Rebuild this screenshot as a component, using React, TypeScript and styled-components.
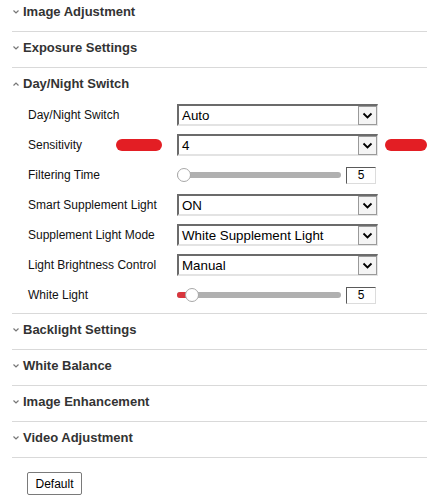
import React from "react";
import styled, { createGlobalStyle } from "styled-components";

const Global = createGlobalStyle`
  html, body { margin: 0; padding: 0; background: #fff; }
  body { font-family: Arial, "Liberation Sans", sans-serif; }
`;

const Page = styled.div`
  width: 415px;
  margin-left: 12px;
  display: flex;
  flex-direction: column;
`;

const Section = styled.div<{ $open?: boolean }>`
  border-bottom: 1px solid #d9d9d9;
  margin-bottom: 4px;
  padding-bottom: ${(p) => (p.$open ? "3px" : "8px")};
`;

const Header = styled.div`
  height: 23px;
  display: flex;
  align-items: center;
  gap: 3px;
  font-size: 13px;
  font-weight: bold;
  color: #333;
`;

const Rows = styled.div`
  margin-top: 5px;
  display: flex;
  flex-direction: column;
`;

const Row = styled.div`
  height: 30px;
  display: grid;
  grid-template-columns: 149px 1fr;
  align-items: center;
  padding-left: 16px;
`;

const Label = styled.div`
  display: flex;
  align-items: center;
  font-size: 12px;
  color: #111;
`;

const Control = styled.div`
  display: flex;
  align-items: center;
`;

const Redact = styled.span<{ $w: number; $left?: boolean }>`
  display: inline-block;
  width: ${(p) => p.$w}px;
  height: 12px;
  border-radius: 6px;
  background: #e31e24;
  margin-left: ${(p) => (p.$left ? "auto" : "7px")};
  margin-right: ${(p) => (p.$left ? "15px" : "0")};
`;

const SelectBox = styled.div`
  box-sizing: border-box;
  width: 201px;
  height: 22px;
  border-style: solid;
  border-width: 2px 1px 2px 2px;
  border-color: #6b6b6b #e6e6e6 #e3e3e3 #6b6b6b;
  background: #fff;
  display: flex;
  align-items: center;
  justify-content: space-between;
  font-size: 13.333px;
  color: #000;
  padding-left: 3px;
`;

const ArrowBox = styled.div`
  box-sizing: border-box;
  width: 19px;
  height: 19px;
  border: 1px solid #9a9a9a;
  background: #f4f4f4;
  display: flex;
  align-items: center;
  justify-content: center;
`;

const Track = styled.div`
  position: relative;
  width: 164px;
  height: 6px;
  border-radius: 3px;
  background: #b0b0b0;
`;

const Fill = styled.div`
  position: absolute;
  left: 0;
  top: 0;
  height: 6px;
  border-radius: 3px 0 0 3px;
  background: #d9363e;
`;

const Thumb = styled.div`
  position: absolute;
  top: -4px;
  width: 14px;
  height: 14px;
  box-sizing: border-box;
  border-radius: 50%;
  border: 1px solid #a8a8a8;
  background: #fff;
`;

const NumBox = styled.div`
  box-sizing: border-box;
  width: 30px;
  height: 17px;
  margin-left: 5px;
  border-style: solid;
  border-width: 1px;
  border-color: #5a5a5a #dcdcdc #dcdcdc #5a5a5a;
  font-size: 12px;
  color: #000;
  display: flex;
  align-items: center;
  justify-content: center;
`;

const Footer = styled.div`
  padding: 10px 0 0 15px;
`;

const Button = styled.button`
  box-sizing: border-box;
  width: 55px;
  height: 23px;
  border: 1px solid #7a7a7a;
  border-radius: 2px;
  background: #fff;
  font-family: Arial, "Liberation Sans", sans-serif;
  font-size: 12px;
  color: #000;
  padding: 0;
`;

const Chevron = ({ up }: { up?: boolean }) => (
  <svg width="8" height="6" viewBox="0 0 8 6">
    <polyline
      points={up ? "1.5,4.5 4,2 6.5,4.5" : "1.5,1.5 4,4 6.5,1.5"}
      fill="none"
      stroke="#777"
      strokeWidth="1.2"
    />
  </svg>
);

const SelectArrow = () => (
  <svg width="11" height="7" viewBox="0 0 11 7">
    <polyline points="1.5,1.5 5.5,5.5 9.5,1.5" fill="none" stroke="#000" strokeWidth="1.8" />
  </svg>
);

const Select = ({ value }: { value: string }) => (
  <SelectBox>
    <span>{value}</span>
    <ArrowBox>
      <SelectArrow />
    </ArrowBox>
  </SelectBox>
);

const Slider = ({ pos, fill }: { pos: number; fill?: number }) => (
  <>
    <Track>
      {fill ? <Fill style={{ width: fill }} /> : null}
      <Thumb style={{ left: pos }} />
    </Track>
    <NumBox>5</NumBox>
  </>
);

const CollapsedSection = ({ title }: { title: string }) => (
  <Section>
    <Header>
      <Chevron />
      {title}
    </Header>
  </Section>
);

export default function App() {
  return (
    <>
      <Global />
      <Page>
        <CollapsedSection title="Image Adjustment" />
        <CollapsedSection title="Exposure Settings" />
        <Section $open>
          <Header>
            <Chevron up />
            Day/Night Switch
          </Header>
          <Rows>
            <Row>
              <Label>Day/Night Switch</Label>
              <Control>
                <Select value="Auto" />
              </Control>
            </Row>
            <Row>
              <Label>
                Sensitivity
                <Redact $w={46} $left />
              </Label>
              <Control>
                <Select value="4" />
                <Redact $w={42} />
              </Control>
            </Row>
            <Row>
              <Label>Filtering Time</Label>
              <Control>
                <Slider pos={0} />
              </Control>
            </Row>
            <Row>
              <Label>Smart Supplement Light</Label>
              <Control>
                <Select value="ON" />
              </Control>
            </Row>
            <Row>
              <Label>Supplement Light Mode</Label>
              <Control>
                <Select value="White Supplement Light" />
              </Control>
            </Row>
            <Row>
              <Label>Light Brightness Control</Label>
              <Control>
                <Select value="Manual" />
              </Control>
            </Row>
            <Row>
              <Label>White Light</Label>
              <Control>
                <Slider pos={8} fill={10} />
              </Control>
            </Row>
          </Rows>
        </Section>
        <CollapsedSection title="Backlight Settings" />
        <CollapsedSection title="White Balance" />
        <CollapsedSection title="Image Enhancement" />
        <CollapsedSection title="Video Adjustment" />
        <Footer>
          <Button>Default</Button>
        </Footer>
      </Page>
    </>
  );
}
